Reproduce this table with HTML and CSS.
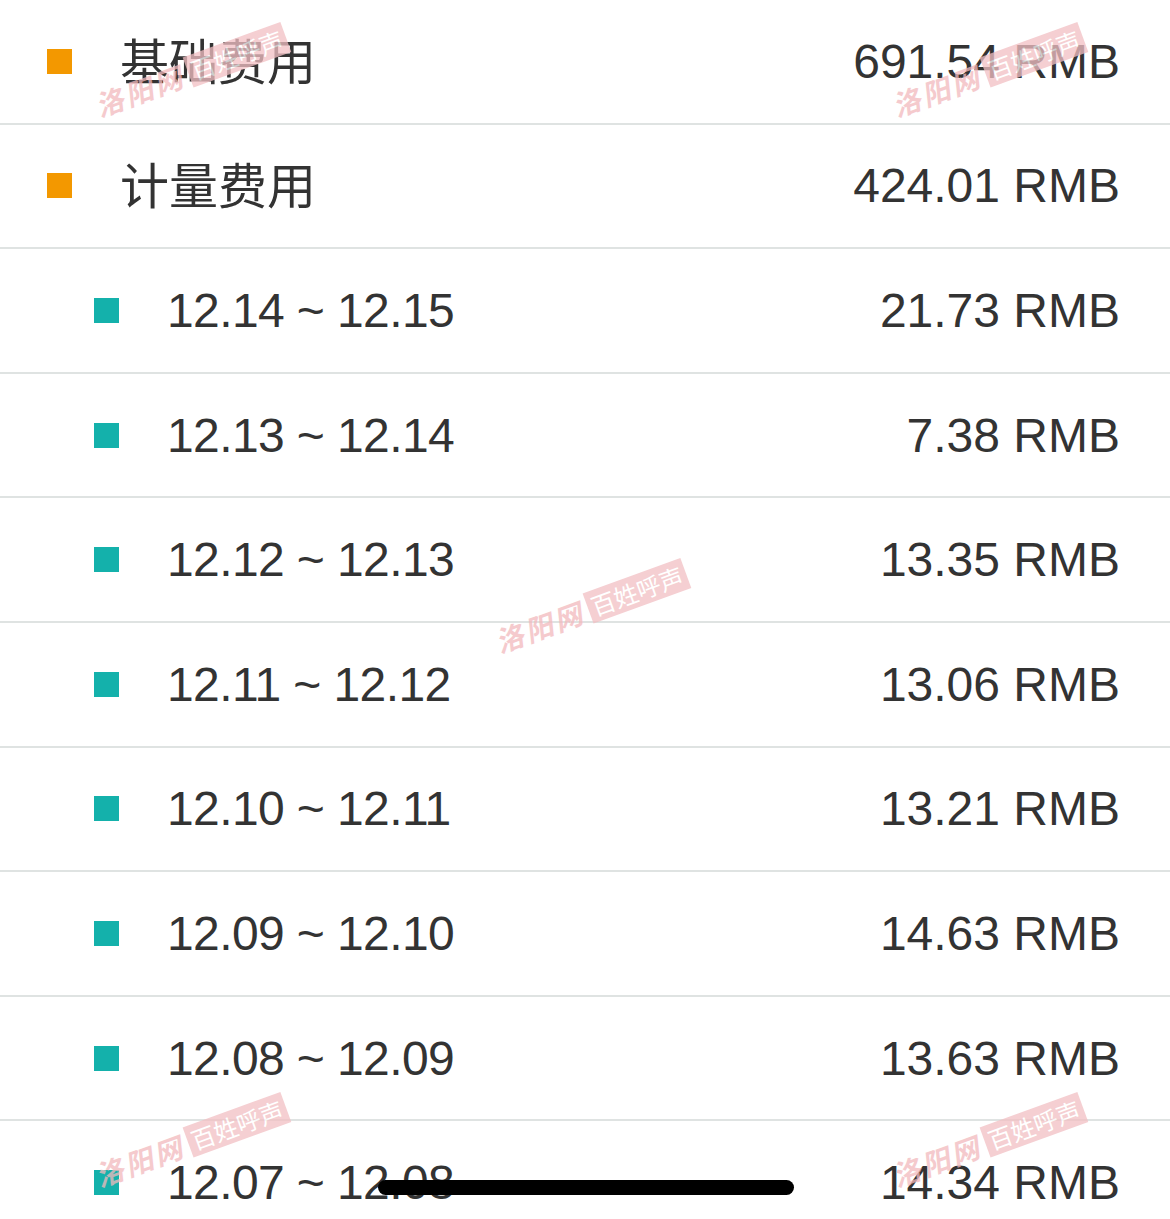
FILE: index.html
```html
<!DOCTYPE html>
<html lang="zh">
<head>
<meta charset="utf-8">
<link rel="stylesheet" href="styles.css">
</head>
<body>
<div class="list">
  <div class="row">
    <span class="dot orange"></span><span class="label cjk">基础费用</span><span class="amount">691.54 RMB</span>
  </div>
  <div class="row">
    <span class="dot orange"></span><span class="label cjk">计量费用</span><span class="amount">424.01 RMB</span>
  </div>
  <div class="row sub">
    <span class="dot teal"></span><span class="label">12.14 ~ 12.15</span><span class="amount">21.73 RMB</span>
  </div>
  <div class="row sub">
    <span class="dot teal"></span><span class="label">12.13 ~ 12.14</span><span class="amount">7.38 RMB</span>
  </div>
  <div class="row sub">
    <span class="dot teal"></span><span class="label">12.12 ~ 12.13</span><span class="amount">13.35 RMB</span>
  </div>
  <div class="row sub">
    <span class="dot teal"></span><span class="label">12.11 ~ 12.12</span><span class="amount">13.06 RMB</span>
  </div>
  <div class="row sub">
    <span class="dot teal"></span><span class="label">12.10 ~ 12.11</span><span class="amount">13.21 RMB</span>
  </div>
  <div class="row sub">
    <span class="dot teal"></span><span class="label">12.09 ~ 12.10</span><span class="amount">14.63 RMB</span>
  </div>
  <div class="row sub">
    <span class="dot teal"></span><span class="label">12.08 ~ 12.09</span><span class="amount">13.63 RMB</span>
  </div>
  <div class="row sub">
    <span class="dot teal"></span><span class="label">12.07 ~ 12.08</span><span class="amount">14.34 RMB</span>
  </div>
</div>

<div class="wm wm1"><span class="wm-a">洛阳网</span><span class="wm-b">百姓呼声</span></div>
<div class="wm wm2"><span class="wm-a">洛阳网</span><span class="wm-b">百姓呼声</span></div>
<div class="wm wm3"><span class="wm-a">洛阳网</span><span class="wm-b">百姓呼声</span></div>
<div class="wm wm4"><span class="wm-a">洛阳网</span><span class="wm-b">百姓呼声</span></div>
<div class="wm wm5"><span class="wm-a">洛阳网</span><span class="wm-b">百姓呼声</span></div>

<div class="home-indicator"></div>
</body>
</html>
```

FILE: styles.css
```css
html, body {
  margin: 0;
  padding: 0;
  background: #ffffff;
}
body {
  width: 1170px;
  height: 1219px;
  overflow: hidden;
  position: relative;
  font-family: "Liberation Sans", "Noto Sans CJK SC", sans-serif;
  color: #333333;
}
.list {
  display: flex;
  flex-direction: column;
}
.row {
  box-sizing: border-box;
  height: 124.6px;
  flex: none;
  display: flex;
  align-items: center;
  padding: 0 50px 0 47px;
  border-bottom: 2px solid #dfe3e2;
}
.row.sub {
  padding-left: 94px;
}
.dot {
  width: 25px;
  height: 25px;
  flex: none;
  margin-right: 48px;
}
.orange { background: #f39800; }
.teal { background: #14b1ab; }
.label {
  font-size: 48px;
  letter-spacing: -0.6px;
  flex: 1;
  white-space: nowrap;
}
.label.cjk {
  font-family: "Noto Sans CJK SC", sans-serif;
  font-size: 49px;
  letter-spacing: 0;
  position: relative;
  top: -3px;
}
.amount {
  font-size: 48px;
  letter-spacing: 0;
  white-space: nowrap;
}

.wm {
  position: absolute;
  display: flex;
  align-items: center;
  gap: 5px;
  transform: rotate(-20deg);
  transform-origin: left center;
  opacity: 0.75;
  pointer-events: none;
}
.wm-a {
  font-family: "DejaVu Serif", "Noto Sans CJK SC", serif;
  font-style: italic;
  font-weight: bold;
  font-size: 28px;
  color: #f2b9bd;
  letter-spacing: 3px;
}
.wm-b {
  font-family: "Noto Sans CJK SC", sans-serif;
  font-size: 24px;
  color: #ffffff;
  background: #f2bfc3;
  padding: 0 4px;
  line-height: 32px;
}
.wm1 { left: 96px; top: 86px; }
.wm2 { left: 893px; top: 86px; }
.wm3 { left: 496px; top: 622px; }
.wm4 { left: 96px; top: 1156px; }
.wm5 { left: 893px; top: 1156px; }

.home-indicator {
  position: absolute;
  left: 378px;
  top: 1180px;
  width: 416px;
  height: 15px;
  border-radius: 8px;
  background: #000000;
}
```
